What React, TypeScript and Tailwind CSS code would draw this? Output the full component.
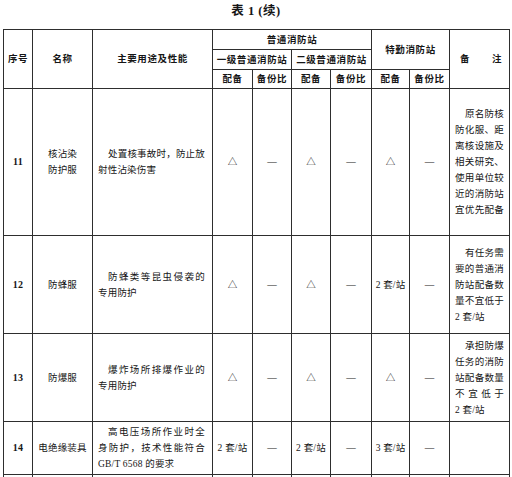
import React from 'react';

type Line = { t: string; indent?: boolean; justify?: boolean };

interface RowData {
  no: string;
  name: string[];
  desc: Line[];
  cells: string[];
  note: Line[];
  height: string;
}

const rows: RowData[] = [
  {
    no: '11',
    name: ['核沾染', '防护服'],
    desc: [
      { t: '处置核事故时，防止放', indent: true, justify: true },
      { t: '射性沾染伤害' },
    ],
    cells: ['△', '—', '△', '—', '△', '—'],
    note: [
      { t: '原名防核', indent: true, justify: true },
      { t: '防化服、距', justify: true },
      { t: '离核设施及', justify: true },
      { t: '相关研究、', justify: true },
      { t: '使用单位较', justify: true },
      { t: '近的消防站', justify: true },
      { t: '宜优先配备', justify: true },
    ],
    height: 'h-[147px]',
  },
  {
    no: '12',
    name: ['防蜂服'],
    desc: [
      { t: '防蜂类等昆虫侵袭的', indent: true, justify: true },
      { t: '专用防护' },
    ],
    cells: ['△', '—', '△', '—', '2 套/站', '—'],
    note: [
      { t: '有任务需', indent: true, justify: true },
      { t: '要的普通消', justify: true },
      { t: '防站配备数', justify: true },
      { t: '量不宜低于', justify: true },
      { t: '2 套/站' },
    ],
    height: 'h-[98px]',
  },
  {
    no: '13',
    name: ['防爆服'],
    desc: [
      { t: '爆炸场所排爆作业的', indent: true, justify: true },
      { t: '专用防护' },
    ],
    cells: ['△', '—', '△', '—', '△', '—'],
    note: [
      { t: '承担防爆', indent: true, justify: true },
      { t: '任务的消防', justify: true },
      { t: '站配备数量', justify: true },
      { t: '不宜低于', justify: true },
      { t: '2 套/站' },
    ],
    height: 'h-[88px]',
  },
  {
    no: '14',
    name: ['电绝缘装具'],
    desc: [
      { t: '高电压场所作业时全', indent: true, justify: true },
      { t: '身防护，技术性能符合', justify: true },
      { t: 'GB/T 6568 的要求' },
    ],
    cells: ['2 套/站', '—', '2 套/站', '—', '3 套/站', '—'],
    note: [],
    height: 'h-[53px]',
  },
];

const cell = 'border border-[#2e2e2e] p-0 align-middle';

const TextLines: React.FC<{ lines: Line[] }> = ({ lines }) => (
  <>
    {lines.map((l, i) => (
      <div
        key={i}
        className={`whitespace-nowrap ${l.indent ? 'pl-[10px]' : ''} ${l.justify ? 'text-justify [text-align-last:justify]' : 'text-left'}`}
      >
        {l.t}
      </div>
    ))}
  </>
);

export default function App() {
  return (
    <div className="w-[512px] h-[477px] overflow-hidden bg-white text-[#161616] font-['Liberation_Serif','Noto_Sans_CJK_SC',serif]">
      <div className="h-[29px] pt-[4px] text-center text-[12.5px] leading-[14px] font-bold tracking-[0.5px]">
        表 1 (续)
      </div>

      <table className="ml-[3px] w-[506px] table-fixed border-collapse">
        <colgroup>
          <col className="w-[29px]" />
          <col className="w-[60px]" />
          <col className="w-[120px]" />
          <col className="w-[40px]" />
          <col className="w-[39px]" />
          <col className="w-[39px]" />
          <col className="w-[41px]" />
          <col className="w-[38px]" />
          <col className="w-[40px]" />
          <col className="w-[60px]" />
        </colgroup>
        <thead className="text-[9.5px] leading-[12px] font-bold tracking-[0.6px]">
          <tr className="h-[20px]">
            <th rowSpan={3} className={`${cell} text-center`}>序号</th>
            <th rowSpan={3} className={`${cell} text-center`}>名称</th>
            <th rowSpan={3} className={`${cell} text-center`}>主要用途及性能</th>
            <th colSpan={4} className={`${cell} text-center`}>普通消防站</th>
            <th colSpan={2} rowSpan={2} className={`${cell} text-center`}>特勤消防站</th>
            <th rowSpan={3} className={cell}>
              <div className="flex justify-between pl-[10px] pr-[7px]">
                <span>备</span>
                <span>注</span>
              </div>
            </th>
          </tr>
          <tr className="h-[20px]">
            <th colSpan={2} className={`${cell} text-center whitespace-nowrap`}>一级普通消防站</th>
            <th colSpan={2} className={`${cell} text-center whitespace-nowrap`}>二级普通消防站</th>
          </tr>
          <tr className="h-[19px]">
            <th className={`${cell} text-center`}>配备</th>
            <th className={`${cell} text-center`}>备份比</th>
            <th className={`${cell} text-center`}>配备</th>
            <th className={`${cell} text-center`}>备份比</th>
            <th className={`${cell} text-center`}>配备</th>
            <th className={`${cell} text-center`}>备份比</th>
          </tr>
        </thead>
        <tbody className="text-[9.5px] leading-[16px] tracking-[0.2px]">
          {rows.map((r) => (
            <tr key={r.no} className={r.height}>
              <td className={`${cell} text-center text-[10px] font-bold`}>{r.no}</td>
              <td className={`${cell} text-center`}>
                {r.name.map((n) => (
                  <div key={n}>{n}</div>
                ))}
              </td>
              <td className={`${cell} pl-[5px] pr-[7px]`}>
                <TextLines lines={r.desc} />
              </td>
              {r.cells.map((c, i) => (
                <td key={i} className={`${cell} text-center whitespace-nowrap`}>
                  {c}
                </td>
              ))}
              <td className={`${cell} pl-[5px] pr-[5px]`}>
                <TextLines lines={r.note} />
              </td>
            </tr>
          ))}
          <tr className="h-[20px]">
            {Array.from({ length: 10 }).map((_, i) => (
              <td key={i} className={cell} />
            ))}
          </tr>
        </tbody>
      </table>
    </div>
  );
}
